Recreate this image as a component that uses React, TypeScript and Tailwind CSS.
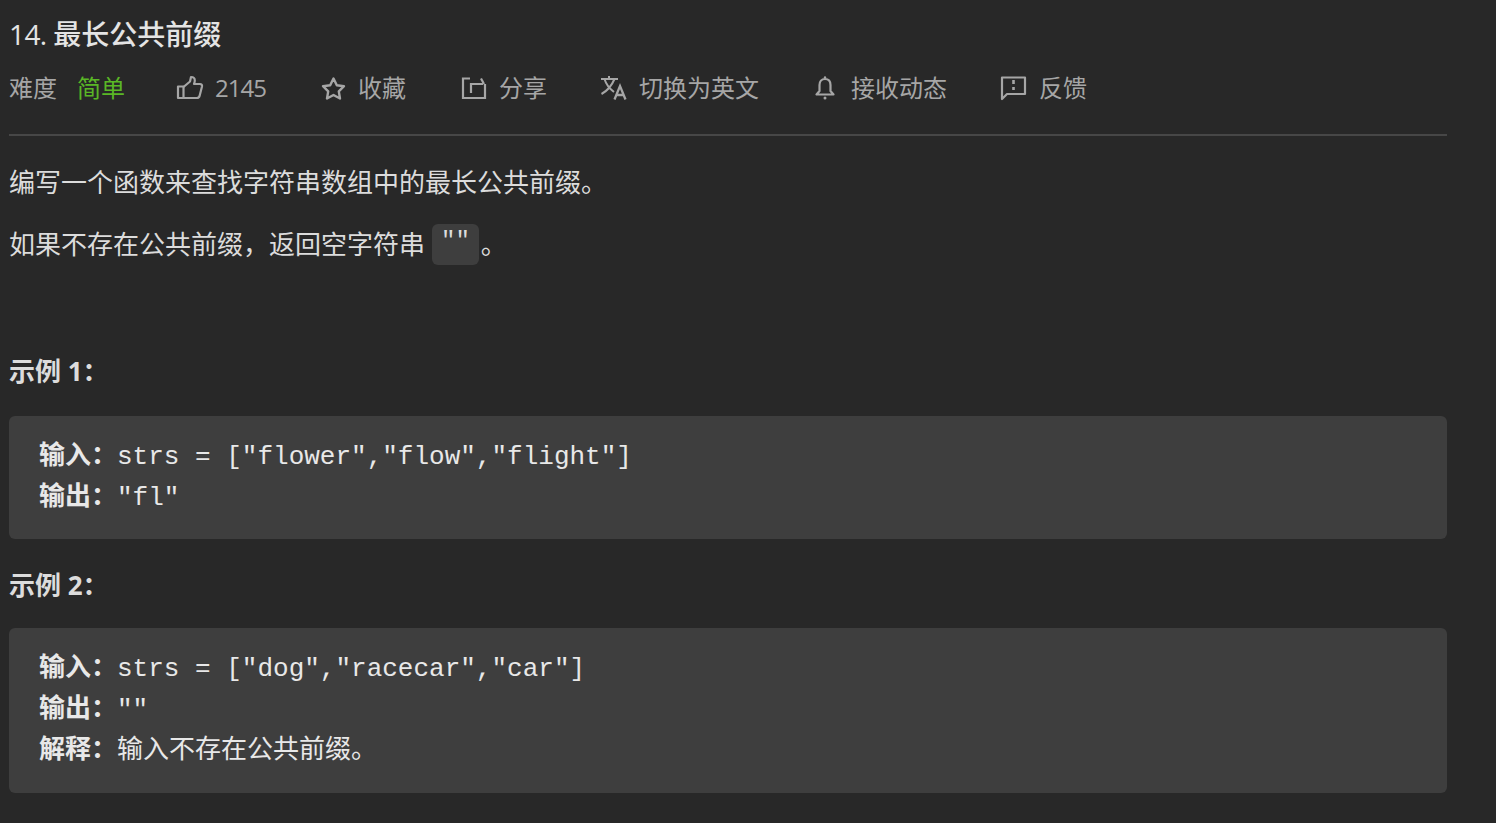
const cjk = "font-['Open_Sans','Noto_Sans_CJK_SC',sans-serif]";
const mono = "font-['Liberation_Mono','Noto_Sans_CJK_SC',monospace]";

function ThumbIcon() {
    return (
        <svg width="28" height="28" viewBox="0 0 28 28" fill="none" stroke="currentColor" strokeWidth="2.2" strokeLinejoin="round">
            <path d="M2 12.500h5.500V24H2z" />
            <path d="M7.500 13l6.500-5.500 1-4.500c2.500 0 3.800 1.500 3.800 3.500 0 1.500-.8 3.500-.8 3.500h6c1.500 0 2.300 1.200 2 2.500l-2.300 9c-.3 1.500-1.500 2.500-3 2.500H7.500" />
        </svg>
    );
}

function StarIcon() {
    return (
        <svg width="28" height="28" viewBox="0 0 28 28" fill="none" stroke="currentColor" strokeWidth="2.400" strokeLinejoin="round">
            <path d="M12.500 4.500L15.800 11.200 23 12.200 17.800 17.400 19 24.500 12.500 21 6 24.500 7.200 17.400 2 12.200 9.200 11.200z" />
        </svg>
    );
}

function ShareIcon() {
    return (
        <svg width="28" height="28" viewBox="0 0 28 28" fill="none" stroke="currentColor" strokeWidth="2.200">
            <path d="M10 4.500H3V24h22V10" />
            <path d="M11 19v-9h12" />
            <path d="M21 4.500l3 5.500" />
        </svg>
    );
}

function TranslateIcon() {
    return (
        <svg width="28" height="28" viewBox="0 0 28 28" fill="none" stroke="currentColor" strokeWidth="2">
            <path d="M1 5h17M9 2v3M14.500 5C12 11 7 17 1.500 20M4.500 5C6 10 10 15 14 18" />
            <path d="M14.500 25.500L20 12l5.500 13.500M16.500 21h7" strokeWidth="2.300" />
        </svg>
    );
}

function BellIcon() {
    return (
        <svg width="28" height="28" viewBox="0 0 28 28" fill="none" stroke="currentColor" strokeWidth="2.200" strokeLinejoin="round">
            <path d="M12 5c-3.500 0-5.500 2.500-5.500 6v6l-3 3.500h17l-3-3.500v-6c0-3.500-2-6-5.500-6z" />
            <circle cx="12" cy="3.500" r="1.200" fill="currentColor" stroke="none" />
            <circle cx="12" cy="24" r="1.500" fill="currentColor" stroke="none" />
        </svg>
    );
}

function FeedbackIcon() {
    return (
        <svg width="28" height="28" viewBox="0 0 28 28" fill="none" stroke="currentColor" strokeWidth="2.200" strokeLinejoin="round">
            <path d="M2 3.500h23V20H7l-5 5z" />
            <path d="M13.500 6v4M13.500 13v3" strokeWidth="2.600" />
        </svg>
    );
}

const actions = [
    { icon: <ThumbIcon />, label: "2145", gap: "gap-[11px] tracking-[-1px]", width: "w-[145px]" },
    { icon: <StarIcon />, label: "收藏", gap: "gap-[9px]", width: "w-[139px]" },
    { icon: <ShareIcon />, label: "分享", gap: "gap-[11px]", width: "w-[140px]" },
    { icon: <TranslateIcon />, label: "切换为英文", gap: "gap-[11px]", width: "w-[213px]" },
    { icon: <BellIcon />, label: "接收动态", gap: "gap-[10px]", width: "w-[187px]" },
    { icon: <FeedbackIcon />, label: "反馈", gap: "gap-[11px]", width: "" },
];

function Example({ lines, bottom }: { lines: { label: string; text: string }[]; bottom: string }) {
    return (
        <pre className={`rounded-[6px] bg-[#3e3e3e] px-[30px] pt-[21px] text-[26px] leading-[41px] text-[#e8e8e8] ${bottom} ${mono}`}>
            {lines.map(({ label, text }) => (
                <div key={label}>
                    <b className="font-bold">{label}</b>
                    {text}
                </div>
            ))}
        </pre>
    );
}

export default function App() {
    return (
        <div className={`h-[823px] overflow-hidden bg-[#282828] pl-[9px] pr-[49px] ${cjk}`}>
            <h1 className="pt-[15px] text-[28px] leading-[38px] text-[#e4e4e4]">
                <span className="tracking-[-0.6px]">14. </span>
                <span className="font-medium">最长公共前缀</span>
            </h1>

            <div className="mt-[17px] flex h-[36px] items-center text-[24px] text-[#a6a6a6]">
                <span className="w-[68px]">难度</span>
                <span className="w-[99px] text-[#5ab726]">简单</span>
                {actions.map(({ icon, label, gap, width }) => (
                    <div key={label} className={`flex shrink-0 items-center ${gap} ${width}`}>
                        {icon}
                        <span>{label}</span>
                    </div>
                ))}
            </div>

            <div className="mt-[28px] h-[2px] bg-[#474747]" />

            <p className="mt-[27px] text-[26px] leading-[38px] text-[#dcdcdc]">
                编写一个函数来查找字符串数组中的最长公共前缀。
            </p>
            <p className="mt-[21px] flex h-[44px] items-center text-[26px] text-[#dcdcdc]">
                如果不存在公共前缀，返回空字符串
                <code className={`mr-[2px] ml-[7px] h-[41px] rounded-[6px] bg-[#3e3e3e] px-[9px] text-[24px] leading-[36px] ${mono}`}>""</code>
                。
            </p>

            <h3 className="mt-[86px] text-[26px] leading-[38px] font-bold text-[#dcdcdc]">示例 1：</h3>
            <div className="mt-[26px]">
                <Example
                    bottom="pb-[20px]"
                    lines={[
                        { label: "输入：", text: 'strs = ["flower","flow","flight"]' },
                        { label: "输出：", text: '"fl"' },
                    ]}
                />
            </div>

            <h3 className="mt-[27px] text-[26px] leading-[38px] font-bold text-[#dcdcdc]">示例 2：</h3>
            <div className="mt-[24px]">
                <Example
                    bottom="pb-[21px]"
                    lines={[
                        { label: "输入：", text: 'strs = ["dog","racecar","car"]' },
                        { label: "输出：", text: '""' },
                        { label: "解释：", text: "输入不存在公共前缀。" },
                    ]}
                />
            </div>
        </div>
    );
}
